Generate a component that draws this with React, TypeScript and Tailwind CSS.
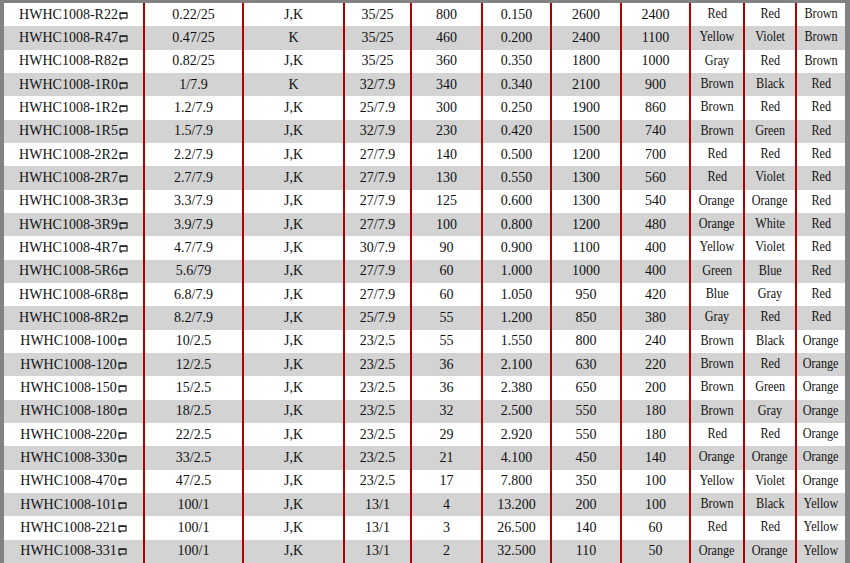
import React from "react";

const rows: string[][] = [
  ["R22", "0.22/25", "J,K", "35/25", "800", "0.150", "2600", "2400", "Red", "Red", "Brown"],
  ["R47", "0.47/25", "K", "35/25", "460", "0.200", "2400", "1100", "Yellow", "Violet", "Brown"],
  ["R82", "0.82/25", "J,K", "35/25", "360", "0.350", "1800", "1000", "Gray", "Red", "Brown"],
  ["1R0", "1/7.9", "K", "32/7.9", "340", "0.340", "2100", "900", "Brown", "Black", "Red"],
  ["1R2", "1.2/7.9", "J,K", "25/7.9", "300", "0.250", "1900", "860", "Brown", "Red", "Red"],
  ["1R5", "1.5/7.9", "J,K", "32/7.9", "230", "0.420", "1500", "740", "Brown", "Green", "Red"],
  ["2R2", "2.2/7.9", "J,K", "27/7.9", "140", "0.500", "1200", "700", "Red", "Red", "Red"],
  ["2R7", "2.7/7.9", "J,K", "27/7.9", "130", "0.550", "1300", "560", "Red", "Violet", "Red"],
  ["3R3", "3.3/7.9", "J,K", "27/7.9", "125", "0.600", "1300", "540", "Orange", "Orange", "Red"],
  ["3R9", "3.9/7.9", "J,K", "27/7.9", "100", "0.800", "1200", "480", "Orange", "White", "Red"],
  ["4R7", "4.7/7.9", "J,K", "30/7.9", "90", "0.900", "1100", "400", "Yellow", "Violet", "Red"],
  ["5R6", "5.6/79", "J,K", "27/7.9", "60", "1.000", "1000", "400", "Green", "Blue", "Red"],
  ["6R8", "6.8/7.9", "J,K", "27/7.9", "60", "1.050", "950", "420", "Blue", "Gray", "Red"],
  ["8R2", "8.2/7.9", "J,K", "25/7.9", "55", "1.200", "850", "380", "Gray", "Red", "Red"],
  ["100", "10/2.5", "J,K", "23/2.5", "55", "1.550", "800", "240", "Brown", "Black", "Orange"],
  ["120", "12/2.5", "J,K", "23/2.5", "36", "2.100", "630", "220", "Brown", "Red", "Orange"],
  ["150", "15/2.5", "J,K", "23/2.5", "36", "2.380", "650", "200", "Brown", "Green", "Orange"],
  ["180", "18/2.5", "J,K", "23/2.5", "32", "2.500", "550", "180", "Brown", "Gray", "Orange"],
  ["220", "22/2.5", "J,K", "23/2.5", "29", "2.920", "550", "180", "Red", "Red", "Orange"],
  ["330", "33/2.5", "J,K", "23/2.5", "21", "4.100", "450", "140", "Orange", "Orange", "Orange"],
  ["470", "47/2.5", "J,K", "23/2.5", "17", "7.800", "350", "100", "Yellow", "Violet", "Orange"],
  ["101", "100/1", "J,K", "13/1", "4", "13.200", "200", "100", "Brown", "Black", "Yellow"],
  ["221", "100/1", "J,K", "13/1", "3", "26.500", "140", "60", "Red", "Red", "Yellow"],
  ["331", "100/1", "J,K", "13/1", "2", "32.500", "110", "50", "Orange", "Orange", "Yellow"],
];

// the little box glyph the source page shows after each part number
function BoxMark() {
  return (
    <svg width="9" height="8" viewBox="0 0 9 8" className="ml-[1px] mt-[2px] shrink-0">
      <rect x="1" y="1" width="7" height="5" fill="none" stroke="#222" strokeWidth="1.2" />
      <rect x="1" y="0.5" width="7" height="1.5" fill="#222" />
      <rect x="1" y="6" width="2" height="1.5" fill="#222" />
    </svg>
  );
}

export default function App() {
  return (
    <div
      className="w-[850px] h-[563px] overflow-hidden bg-[#828282] pl-[4px] pr-[5px] pt-[3px] flex flex-col text-[#111]"
      style={{ fontFamily: '"Liberation Serif", "Times New Roman", serif' }}
    >
      {rows.map((r, i) => (
        <div
          key={i}
          className={`flex-1 grid grid-cols-[139px_99px_101px_67px_71px_69px_70px_69px_54px_52px_50px] ${
            i % 2 === 0 ? "bg-white" : "bg-[#d3d3d3]"
          }`}
        >
          <div className="flex items-center justify-center text-[14px] leading-none">
            <span>HWHC1008-{r[0]}</span>
            <BoxMark />
          </div>
          {r.slice(1).map((c, j) => (
            <div
              key={j}
              className="flex items-center justify-center border-l-2 border-[#b20000] leading-none whitespace-nowrap text-[14px]"
            >
              {j >= 7 ? (
                <span className="inline-block scale-x-[0.87] -mt-[1px]">{c}</span>
              ) : (
                c
              )}
            </div>
          ))}
        </div>
      ))}
    </div>
  );
}
